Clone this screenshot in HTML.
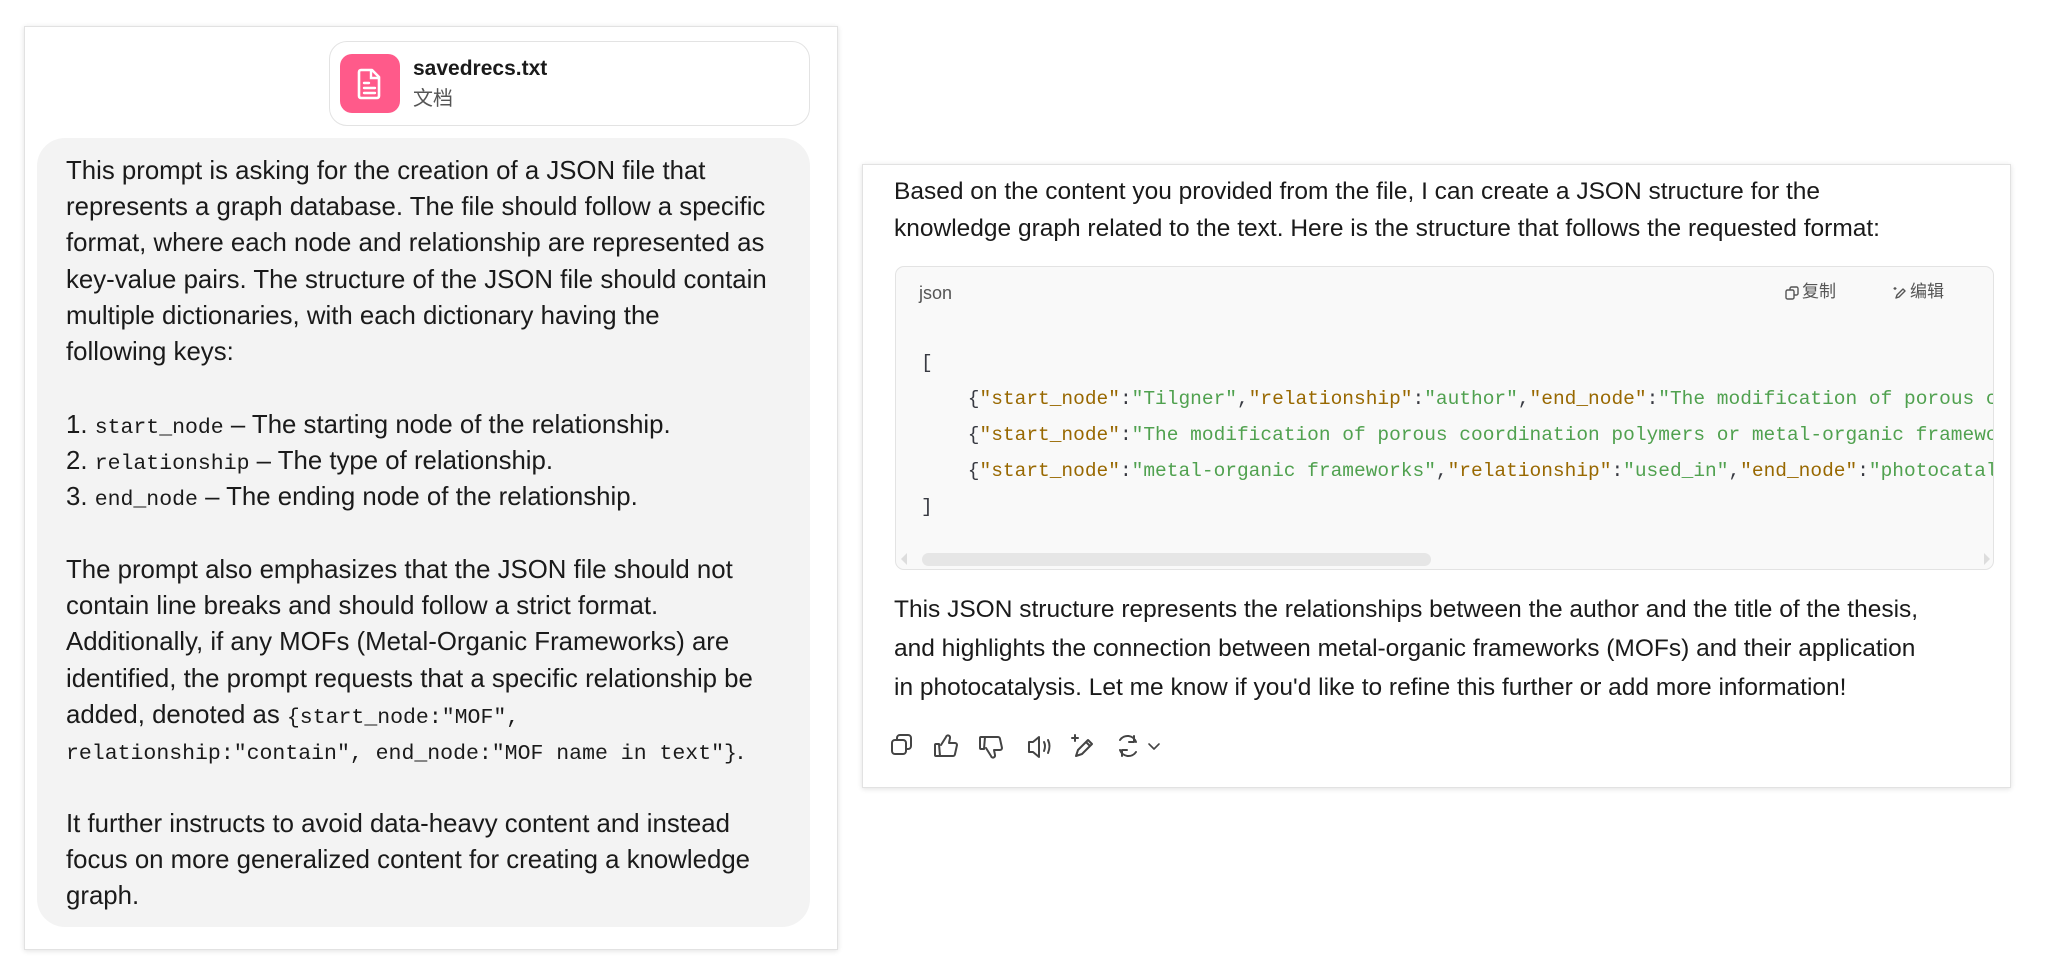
<!DOCTYPE html>
<html><head><meta charset="utf-8"><style>
*{margin:0;padding:0;box-sizing:border-box}
body{width:2053px;height:966px;background:#fff;position:relative;overflow:hidden;font-family:"Liberation Sans","Noto Sans CJK SC",sans-serif;color:#1a1a1a}
.abs{position:absolute;white-space:nowrap}
.panel{position:absolute;background:#fff;border:1px solid #e2e2e2;box-shadow:0 1px 5px rgba(0,0,0,.12)}
.t{position:absolute;white-space:nowrap;font-size:25.8px;line-height:30px}
.r{font-size:24.5px}
.m{font-family:"Liberation Mono",monospace;font-size:21.5px}
.code{position:absolute;white-space:pre;font-family:"Liberation Mono",monospace;font-size:19.5px;line-height:30px;color:#383a42}
.k{color:#986801}.s{color:#50a14f}
</style></head><body>
<div class="panel" style="left:24px;top:26px;width:814px;height:924px"></div>
<div style="position:absolute;left:329px;top:41px;width:481px;height:85px;border:1px solid #e3e3e3;border-radius:18px;background:#fff"></div>
<div style="position:absolute;left:340px;top:54px;width:60px;height:59px;border-radius:12px;background:#ff5a8a"></div>
<svg class="abs" style="left:355px;top:68px" width="30" height="32" viewBox="0 0 30 32"><path d="M6 2h11l7 7v19a2 2 0 0 1-2 2H6a2 2 0 0 1-2-2V4a2 2 0 0 1 2-2z" fill="none" stroke="#fff" stroke-width="2.6" stroke-linejoin="round"/><path d="M16 2v8h8" fill="none" stroke="#fff" stroke-width="2.4"/><path d="M9 15h5M9 20h11M9 25h11" stroke="#fff" stroke-width="2.4" stroke-linecap="round"/></svg>
<div class="abs" style="left:413px;top:55px;font-size:21px;font-weight:bold;line-height:28px">savedrecs.txt</div>
<div class="abs" style="left:413px;top:85px;font-size:20px;color:#555;line-height:28px">文档</div>
<div style="position:absolute;left:37px;top:138px;width:773px;height:789px;background:#f3f3f3;border-radius:28px"></div>
<div class="t" style="left:66px;top:156px">This prompt is asking for the creation of a JSON file that</div>
<div class="t" style="left:66px;top:192px">represents a graph database. The file should follow a specific</div>
<div class="t" style="left:66px;top:228px">format, where each node and relationship are represented as</div>
<div class="t" style="left:66px;top:265px">key-value pairs. The structure of the JSON file should contain</div>
<div class="t" style="left:66px;top:301px">multiple dictionaries, with each dictionary having the</div>
<div class="t" style="left:66px;top:337px">following keys:</div>
<div class="t" style="left:66px;top:410px">1. <span class="m">start_node</span> – The starting node of the relationship.</div>
<div class="t" style="left:66px;top:446px">2. <span class="m">relationship</span> – The type of relationship.</div>
<div class="t" style="left:66px;top:482px">3. <span class="m">end_node</span> – The ending node of the relationship.</div>
<div class="t" style="left:66px;top:555px">The prompt also emphasizes that the JSON file should not</div>
<div class="t" style="left:66px;top:591px">contain line breaks and should follow a strict format.</div>
<div class="t" style="left:66px;top:627px">Additionally, if any MOFs (Metal-Organic Frameworks) are</div>
<div class="t" style="left:66px;top:664px">identified, the prompt requests that a specific relationship be</div>
<div class="t" style="left:66px;top:700px">added, denoted as <span class="m">{start_node:"MOF",</span></div>
<div class="t" style="left:66px;top:736px"><span class="m">relationship:"contain", end_node:"MOF name in text"}</span>.</div>
<div class="t" style="left:66px;top:809px">It further instructs to avoid data-heavy content and instead</div>
<div class="t" style="left:66px;top:845px">focus on more generalized content for creating a knowledge</div>
<div class="t" style="left:66px;top:881px">graph.</div>

<div class="panel" style="left:862px;top:164px;width:1149px;height:624px"></div>
<div class="t r" style="left:894px;top:177px">Based on the content you provided from the file, I can create a JSON structure for the</div>
<div class="t r" style="left:894px;top:214px">knowledge graph related to the text. Here is the structure that follows the requested format:</div>
<div style="position:absolute;left:895px;top:266px;width:1099px;height:304px;background:#f9f9f9;border:1px solid #e3e3e3;border-radius:9px;overflow:hidden">
<div class="abs" style="left:23px;top:14px;font-size:18px;color:#555;line-height:24px">json</div>
<svg class="abs" style="left:888px;top:18px" width="16" height="16" viewBox="0 0 16 16"><rect x="2" y="5" width="8" height="9" rx="1.5" fill="none" stroke="#555" stroke-width="1.4"/><path d="M6 5V3.5A1.5 1.5 0 0 1 7.5 2h5A1.5 1.5 0 0 1 14 3.5v5a1.5 1.5 0 0 1-1.5 1.5H10" fill="none" stroke="#555" stroke-width="1.4"/></svg>
<div class="abs" style="left:906px;top:13px;font-size:17px;color:#555;line-height:24px">复制</div>
<svg class="abs" style="left:996px;top:18px" width="16" height="16" viewBox="0 0 16 16"><path d="M4 13l1-3 6-6 2 2-6 6z" fill="none" stroke="#555" stroke-width="1.4" stroke-linejoin="round"/><path d="M3 2v3M1.5 3.5h3" stroke="#555" stroke-width="1.2"/></svg>
<div class="abs" style="left:1014px;top:13px;font-size:17px;color:#555;line-height:24px">编辑</div>
<div class="code" style="left:25px;top:81px">[</div>
<div class="code" style="left:25px;top:117px">    {<span class="k">"start_node"</span>:<span class="s">"Tilgner"</span>,<span class="k">"relationship"</span>:<span class="s">"author"</span>,<span class="k">"end_node"</span>:<span class="s">"The modification of porous coordination polymers"</span>}</div>
<div class="code" style="left:25px;top:153px">    {<span class="k">"start_node"</span>:<span class="s">"The modification of porous coordination polymers or metal-organic frameworks"</span>}</div>
<div class="code" style="left:25px;top:189px">    {<span class="k">"start_node"</span>:<span class="s">"metal-organic frameworks"</span>,<span class="k">"relationship"</span>:<span class="s">"used_in"</span>,<span class="k">"end_node"</span>:<span class="s">"photocatalysis"</span>}</div>
<div class="code" style="left:25px;top:225px">]</div>
<div class="abs" style="left:5px;top:286px;width:0;height:0;border-top:6px solid transparent;border-bottom:6px solid transparent;border-right:6px solid #ddd"></div>
<div class="abs" style="left:1088px;top:286px;width:0;height:0;border-top:6px solid transparent;border-bottom:6px solid transparent;border-left:6px solid #ddd"></div>
<div class="abs" style="left:26px;top:286px;width:509px;height:13px;border-radius:7px;background:#e6e6e6"></div>
</div>
<div class="t r" style="left:894px;top:595px">This JSON structure represents the relationships between the author and the title of the thesis,</div>
<div class="t r" style="left:894px;top:634px">and highlights the connection between metal-organic frameworks (MOFs) and their application</div>
<div class="t r" style="left:894px;top:673px">in photocatalysis. Let me know if you'd like to refine this further or add more information!</div>
<svg class="abs" style="left:888px;top:730px" width="290" height="32" viewBox="0 0 290 32" fill="none" stroke="#444" stroke-width="2" stroke-linejoin="round" stroke-linecap="round">
<rect x="4" y="10" width="14" height="14" rx="3"/><path d="M9 10V8a3 3 0 0 1 3-3h8a3 3 0 0 1 3 3v8a3 3 0 0 1-3 3h-2"/>
<path d="M52 26h13a2 2 0 0 0 2-2l2-9a2 2 0 0 0-2-2h-6l1-5a2 2 0 0 0-4-1l-5 8M51 14h-3a1 1 0 0 0-1 1v10a1 1 0 0 0 1 1h4z"/>
<path d="M97 7h13a2 2 0 0 1 2 2l2 9a2 2 0 0 1-2 2h-6l1 5a2 2 0 0 1-4 1l-5-8M96 19h-3a1 1 0 0 1-1-1V8a1 1 0 0 1 1-1h4z"/>
<path d="M141 12h4l6-5v20l-6-5h-4zM156 12q2 4 0 9M160 10q3 6 0 13"/>
<path d="M188 26l2-6 10-10 4 4-10 10zM198 12l4 4M187 5v6M184 8h6"/>
<path d="M248 12a9 9 0 0 0-16-2M232 20a9 9 0 0 0 16 2M246 6v6h-5M234 26v-6h5"/>
<path d="M261 14l5 5 5-5" stroke-width="1.6"/>
</svg>
</body></html>
